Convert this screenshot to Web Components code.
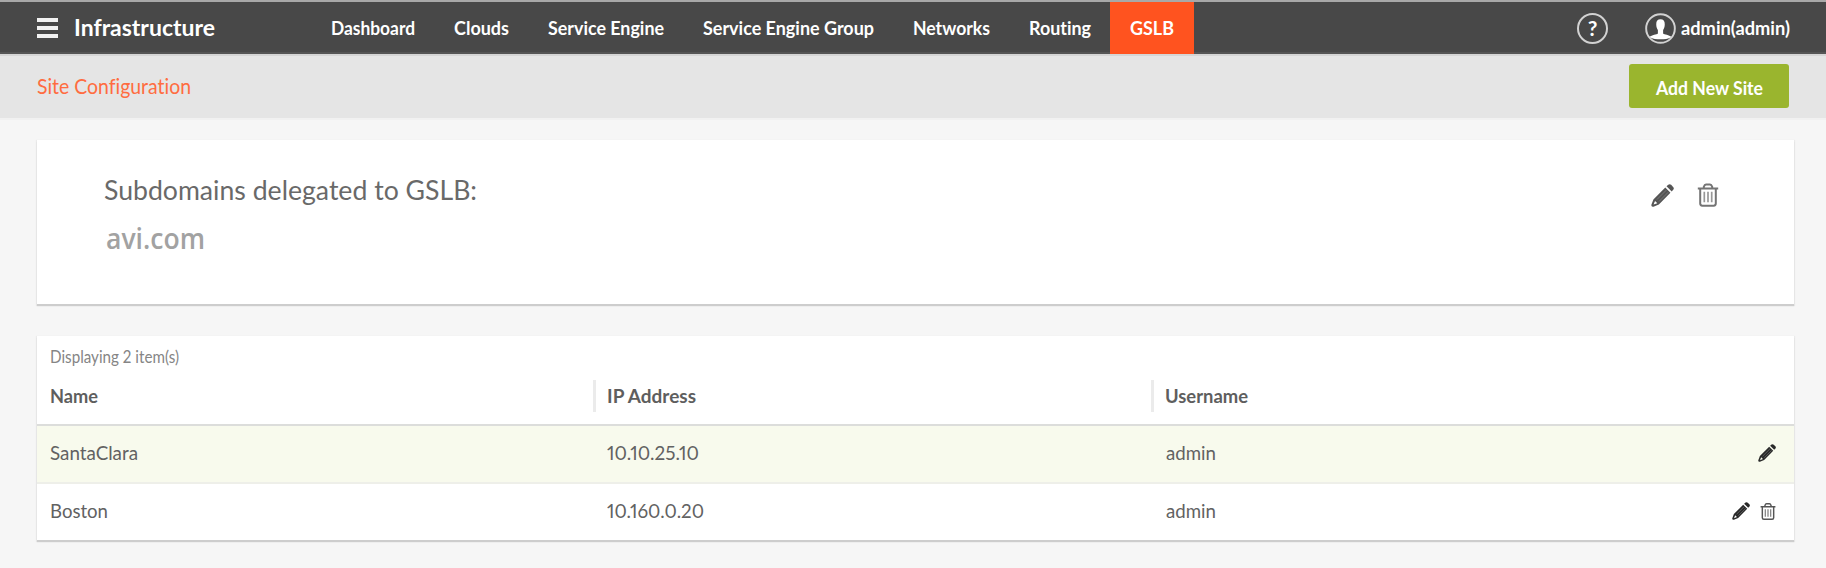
<!DOCTYPE html>
<html lang="en">
<head>
<meta charset="utf-8">
<title>Infrastructure - GSLB</title>
<style>
body{margin:0;background:#f6f6f6;font-family:Lato,"Open Sans",sans-serif;color:#5f5f5f;font-variant-ligatures:none;font-variant-numeric:proportional-nums}
</style>
</head>
<body>
<gslb-page></gslb-page>
<script>
const define=(name,html,setup)=>customElements.define(name,class extends HTMLElement{
  constructor(){super();this.attachShadow({mode:'open'}).innerHTML=html;}
  connectedCallback(){if(setup)setup(this,this.shadowRoot);}
});

/* A single-line label condensed or expanded to its "w" width. */
define('fit-text',`<style>:host{display:block;flex:none;white-space:pre}
span{display:inline-block;transform-origin:0 50%}</style><span><slot></slot></span>`,(el,root)=>{
  const span=root.querySelector('span'),w=+el.getAttribute('w');
  el.style.width=w+'px';
  const n=span.getBoundingClientRect().width;
  if(n)span.style.transform='scaleX('+w/n+')';
});

define('pencil-icon',`<style>:host{display:block;flex:none}svg{display:block;width:100%;height:100%}</style>
<svg viewBox="0 0 24 24" fill="currentColor"><path d="M16.2 2.4 18 .8Q19.5-.4 21 .9L23.1 3Q24.500 4.500 23.200 6L21.600 7.800Z"/><path fill-rule="evenodd" d="M14.900 3.700 20.300 9.100 8.200 21.300 2.600 23.700Q0 24.300.4 21.600L2.500 16.100ZM4.200 17.700 2.700 21.500 6.600 20Z"/><path d="m6.200 16.200 9.800-9.800M8.300 18.300l9.800-9.800" stroke="#8a8a8a" stroke-width=".7"/></svg>`);

define('trash-icon',`<style>:host{display:block;flex:none}svg{display:block;width:100%;height:100%}</style>
<svg viewBox="0 0 22 24" fill="none" stroke="currentColor" stroke-width="2"><path d="M.8 5.4h20.400M6.800 5V3.800Q7.600 1.400 9 1.400h4q1.400 0 2.200 2.400V5M3.200 5.400v15.200q0 2.100 2.100 2.100h11.400q2.100 0 2.100-2.100V5.400"/><path d="M7.300 8.800v10.400M11 8.800v10.400M14.700 8.800v10.400" stroke-width="1.700" opacity=".75"/></svg>`);

define('nav-tab',`<style>:host{display:flex;align-items:center;padding:0 19.5px;color:#fff;font-weight:700;font-size:19px;line-height:24px}
:host([active]){background:#ff531f;padding:0 20px}</style><slot></slot>`);

define('app-header',`<style>
:host{display:flex;box-sizing:border-box;height:54px;border-top:2px solid #a8a8a8;background:linear-gradient(#484848 50px,#555 50px);color:#fff;padding:0 36px 0 37px;align-items:center}
.menu{display:grid;gap:4px;width:21px;margin-right:16px}.menu i{height:4px;background:#f2f2f2}
h1{margin:0;font-size:23.5px;font-weight:700;line-height:28px;width:237px}
h1 fit-text{position:relative;top:-1px}
nav{display:flex;height:52px}
.right{margin-left:auto;display:flex;align-items:center;font-size:19px;font-weight:700;line-height:24px}
svg{width:31px;height:31px;flex:none}.help{margin-right:37px}.user{margin-right:5px}
.help{display:grid;place-items:center;box-sizing:border-box;width:31px;height:31px;border:2px solid #d2d2d2;border-radius:50%;font-size:21px}
</style>
<div class="menu"><i></i><i></i><i></i></div>
<h1><fit-text w="141">Infrastructure</fit-text></h1>
<nav><nav-tab><fit-text w="84">Dashboard</fit-text></nav-tab><nav-tab><fit-text w="55">Clouds</fit-text></nav-tab><nav-tab><fit-text w="116">Service Engine</fit-text></nav-tab><nav-tab><fit-text w="171">Service Engine Group</fit-text></nav-tab><nav-tab><fit-text w="77">Networks</fit-text></nav-tab><nav-tab><fit-text w="62">Routing</fit-text></nav-tab><nav-tab active><fit-text w="44">GSLB</fit-text></nav-tab></nav>
<div class="right"><span class="help">?</span>
<svg class="user" viewBox="0 0 32 32"><circle cx="16" cy="16" r="14.800" fill="none" stroke="#d2d2d2" stroke-width="2"/><path fill="#fff" d="M16 6.500c3 0 4.400 1.800 4.400 5 0 2.900-.9 4.800-1.700 6v3.700c1.200 1.200 6.200 1.400 8.700 3.500-3.500 2-7.300 2.500-11.400 2.500s-7.900-.5-11.400-2.500c2.500-2.100 7.500-2.300 8.700-3.500v-3.700c-.8-1.200-1.700-3.100-1.700-6 0-3.200 1.400-5 4.400-5Z"/></svg>
<fit-text w="109">admin(admin)</fit-text></div>`);

define('site-bar',`<style>
:host{display:flex;box-sizing:border-box;height:66px;padding:0 37px;border-top:2px solid #d5d5d5;border-bottom:2px solid #f1f1f1;background:#e5e5e5;justify-content:space-between;align-items:center;color:#ff6c40;font-size:20.5px;line-height:24px}
:host>fit-text,.title{margin-bottom:3px}
button{font:700 19px/24px Lato,sans-serif;color:#fff;background:#9ab52e;border:0;border-radius:3px;width:160px;height:44px;margin-bottom:2px;padding:3px 0 0;display:flex;justify-content:center;align-items:center}
</style><div class="title"><fit-text w="154">Site Configuration</fit-text></div><button><fit-text w="107">Add New Site</fit-text></button>`);

define('ui-card',`<style>:host{display:block;box-sizing:border-box;background:#fff;box-shadow:0 2px 1px #cdcdcd,0 1px 1px 1px #ebebeb}</style><slot></slot>`);

define('subdomain-panel',`<style>
:host{display:flex;justify-content:space-between;padding:35px 75px 0 67px}
.title{font-size:27px;line-height:30px;color:#696969}
.domain{font:600 28px/34px "Open Sans",sans-serif;color:#a2a2a2;margin:16px 0 0 2px}
.tools{display:flex;gap:23px;padding-top:8px;height:24px}
pencil-icon{width:23px;height:23px;color:#555;margin-top:1px}trash-icon{width:22px;height:24px;color:#747474}
</style><div><div class="title"><fit-text w="373">Subdomains delegated to GSLB:</fit-text></div><div class="domain"><fit-text w="99">avi.com</fit-text></div></div>
<div class="tools"><pencil-icon></pencil-icon><trash-icon></trash-icon></div>`);

define('site-row',`<style>
:host{display:grid;grid-template-columns:557px 559px 1fr auto;align-items:center;box-sizing:border-box;height:56px;padding:0 18px 2px 13px;font-size:19.5px;line-height:24px;color:#626262}
:host([selected]){background:#f8faed;border-bottom:2px solid #eeefe9;height:60px;padding-bottom:5px}
.tools{display:flex;gap:10px;color:#292929}::slotted(pencil-icon){width:18px;height:18px}::slotted(trash-icon){width:16px;height:19px;color:#555}
:host([selected]){height:58px;padding-bottom:3px}
</style><slot name="name"></slot><slot name="ip"></slot><slot name="user"></slot><div class="tools"><slot></slot></div>`);

define('site-table',`<style>
:host{display:block}
.count{padding:11px 13px 0;font-size:17px;line-height:20px;color:#858585}
.head{display:grid;grid-template-columns:556px 558px 1fr;height:32px;margin-top:13px;padding:0 0 12px;border-bottom:2px solid #dcdddb;font-size:19px;font-weight:700;line-height:32px;color:#5e5e5e}
.head>*{padding-left:13px;box-sizing:border-box}.head>*+*{border-left:3px solid #ebebeb;padding-left:11px}
</style><div class="count"><fit-text w="129">Displaying 2 item(s)</fit-text></div>
<div class="head"><div><fit-text w="48">Name</fit-text></div><div><fit-text w="89">IP Address</fit-text></div><div><fit-text w="83">Username</fit-text></div></div>
<site-row selected><fit-text slot="name" w="88">SantaClara</fit-text><fit-text slot="ip" w="92">10.10.25.10</fit-text><fit-text slot="user" w="50">admin</fit-text><pencil-icon></pencil-icon></site-row>
<site-row><fit-text slot="name" w="58">Boston</fit-text><fit-text slot="ip" w="97">10.160.0.20</fit-text><fit-text slot="user" w="50">admin</fit-text><pencil-icon></pencil-icon><trash-icon></trash-icon></site-row>`);

define('gslb-page',`<style>
:host{display:block;height:568px;overflow:hidden}
main{padding:20px 32px 0 37px;display:grid;gap:32px}
.domains{height:164px}.sites{height:204px}
</style><app-header></app-header><site-bar></site-bar>
<main><ui-card class="domains"><subdomain-panel></subdomain-panel></ui-card><ui-card class="sites"><site-table></site-table></ui-card></main>`);
</script>
</body>
</html>
